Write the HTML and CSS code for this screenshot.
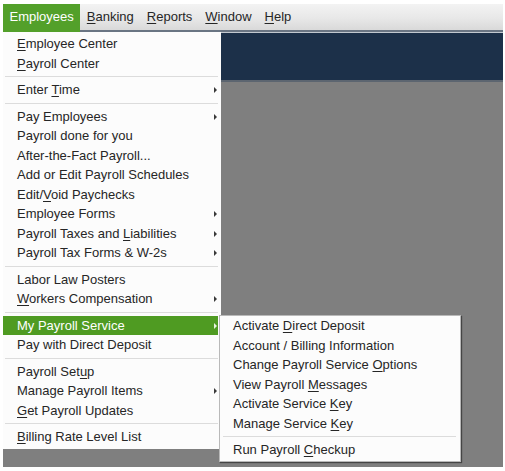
FILE: index.html
```html
<!DOCTYPE html>
<html>
<head>
<meta charset="utf-8">
<link rel="stylesheet" href="styles.css">
</head>
<body>
<div class="app">
  <div class="menubar">
    <div class="mb-item active">Employees</div>
    <div class="mb-item"><u>B</u>anking</div>
    <div class="mb-item"><u>R</u>eports</div>
    <div class="mb-item"><u>W</u>indow</div>
    <div class="mb-item"><u>H</u>elp</div>
  </div>
  <div class="lightline"></div>
  <div class="navy"></div>
  <div class="stripe"></div>
  <div class="workspace"></div>

  <div class="menu main-menu">
    <div class="item"><u>E</u>mployee Center</div>
    <div class="item"><u>P</u>ayroll Center</div>
    <div class="sep"></div>
    <div class="item sub">Enter <u>T</u>ime</div>
    <div class="sep"></div>
    <div class="item sub">Pay Employees</div>
    <div class="item">Payroll done for you</div>
    <div class="item">After-the-Fact Payroll...</div>
    <div class="item">Add or Edit Payroll Schedules</div>
    <div class="item">Edit/<u>V</u>oid Paychecks</div>
    <div class="item sub">Employee Forms</div>
    <div class="item sub">Payroll Taxes and <u>L</u>iabilities</div>
    <div class="item sub">Payroll Tax Forms &amp; W-2s</div>
    <div class="sep"></div>
    <div class="item">Labor Law Posters</div>
    <div class="item sub"><u>W</u>orkers Compensation</div>
    <div class="sep"></div>
    <div class="item sub hl">My Payroll Service
      <div class="menu sub-menu">
        <div class="item">Activate <u>D</u>irect Deposit</div>
        <div class="item">Account / Billing Information</div>
        <div class="item">Change Payroll Service <u>O</u>ptions</div>
        <div class="item">View Payroll <u>M</u>essages</div>
        <div class="item">Activate Service <u>K</u>ey</div>
        <div class="item">Manage Service <u>K</u>ey</div>
        <div class="sep"></div>
        <div class="item">Run Payroll <u>C</u>heckup</div>
      </div>
    </div>
    <div class="item">Pay with Direct Deposit</div>
    <div class="sep"></div>
    <div class="item">Payroll Set<u>u</u>p</div>
    <div class="item sub">Manage Payroll Items</div>
    <div class="item"><u>G</u>et Payroll Updates</div>
    <div class="sep"></div>
    <div class="item"><u>B</u>illing Rate Level List</div>
  </div>
</div>
</body>
</html>
```
FILE: styles.css
```css
html, body {
  margin: 0;
  padding: 0;
  background: #ffffff;
}
body {
  font-family: "Liberation Sans", Arial, sans-serif;
  font-size: 13px;
  color: #262626;
}
u {
  text-decoration: underline;
  text-underline-offset: 2px;
  text-decoration-thickness: 1px;
}
.app {
  position: relative;
  margin: 4px 0 0 3px;
  width: 500px;
  height: 463px;
  background: #7f7f7f;
  display: flex;
  flex-direction: column;
  overflow: hidden;
}
.menubar {
  height: 28px;
  display: flex;
  flex: none;
  background: linear-gradient(#f3f3f3 0px, #e8e8e8 14px, #d9d9d9 26px, #6a7583 26px, #6a7583 28px);
}
.mb-item {
  height: 26px;
  line-height: 26px;
  padding: 0 6.5px;
  color: #262626;
}
.mb-item.active {
  height: 28px;
  background: #53a02a;
  color: #ffffff;
}
.lightline {
  height: 1px;
  flex: none;
  background: #c2c8cf;
}
.navy {
  height: 47px;
  flex: none;
  background: #1c3049;
}
.stripe {
  height: 2px;
  flex: none;
  background: #5c6570;
}
.workspace {
  flex: 1;
  background: #7f7f7f;
}
.menu {
  background: #fcfcfc;
}
.main-menu {
  position: absolute;
  top: 28px;
  left: 0;
  width: 215px;
  padding: 2px 3px 2px 0;
}
.item {
  position: relative;
  height: 19.5px;
  line-height: 19.5px;
  padding-left: 14px;
  white-space: nowrap;
}
.item.sub::after {
  content: "";
  position: absolute;
  right: 1px;
  top: 7px;
  border-left: 3px solid #3a3a3a;
  border-top: 3px solid transparent;
  border-bottom: 3px solid transparent;
}
.item.hl {
  background: #4f9b22;
  color: #ffffff;
}
.item.hl::after {
  border-left-color: #e8f2e0;
}
.sep {
  height: 1px;
  margin: 3px 0 3px 2px;
  background: #dcdcdc;
}
.sub-menu {
  position: absolute;
  left: 216px;
  top: -0.5px;
  width: 240px;
  padding: 0 0 1px 0;
  border: 1px solid #b9b9b9;
  box-shadow: 1px 1px 1px rgba(0,0,0,0.45);
  color: #262626;
}
.sub-menu .item {
  padding-left: 13px;
}
.sub-menu .sep {
  margin: 3px 4px 3px 3px;
}
```
